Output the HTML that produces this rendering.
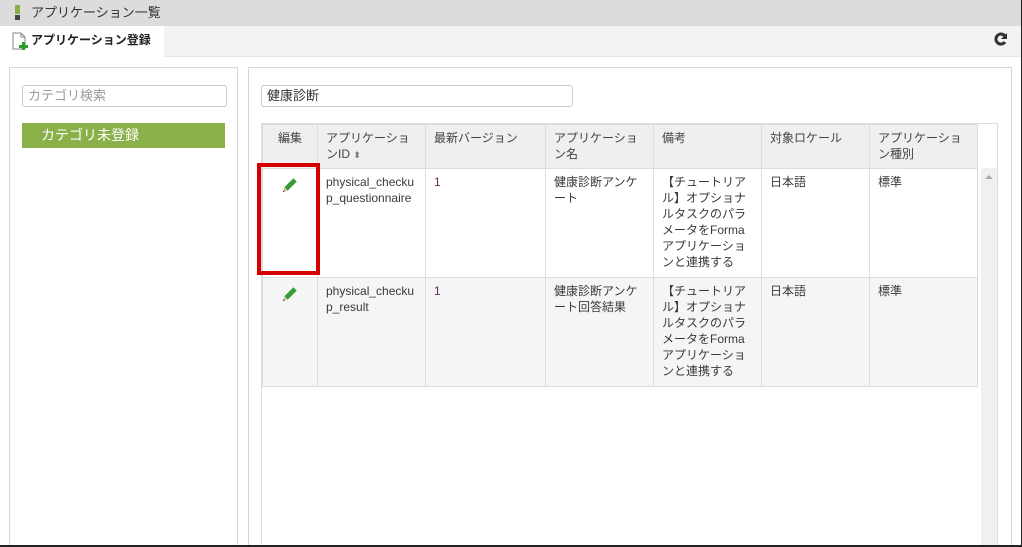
<!DOCTYPE html>
<html><head><meta charset="utf-8"><style>
*{box-sizing:border-box;margin:0;padding:0}
html,body{width:1022px;height:547px;overflow:hidden}
body{background:#fff;font-family:"Liberation Sans","Noto Sans CJK JP",sans-serif;font-size:12px;color:#333;position:relative}
.abs{position:absolute}
.frame{position:absolute;left:0;top:0;width:1022px;height:547px;border-right:1px solid #222;border-bottom:2px solid #222;pointer-events:none}
.title{left:0;top:0;width:1022px;height:26px;background:#dcdcdc;font-size:13px;line-height:26px;padding-left:31px;color:#333}
.tabbar{left:0;top:26px;width:1022px;height:31px;background:#f3f3f3;border-bottom:1px solid #e6e6e6}
.tab{left:0;top:26px;width:164px;height:31px;background:#fff;font-weight:bold;font-size:12px;line-height:28px;padding-left:31px;color:#222}
.panel{border:1px solid #d8d8d8;background:#fff}
.inp{border:1px solid #ccc;border-radius:3px;height:22px;font-size:13px;line-height:20px;padding-left:5px;color:#999}
table{border-collapse:collapse;position:absolute;left:262px;top:124px;table-layout:fixed;width:716px}
td,th{border:1px solid #ddd;vertical-align:top;text-align:left;font-weight:normal;padding:5px 8px;line-height:16px;font-size:12px;color:#3a3a3a;word-break:break-all}
th{background:#efefef;height:44px;color:#444}
tr.r td{height:109px}
tr.r2 td{background:#f5f5f5}
.pur{color:#6b2b5a}
</style></head><body>
<div class="abs title">アプリケーション一覧</div>
<div class="abs" style="left:15px;top:5px;width:5px;height:9px;background:#8ab04a"></div>
<div class="abs" style="left:15px;top:15px;width:5px;height:5px;background:#444"></div>
<div class="abs tabbar"></div>
<div class="abs tab">アプリケーション登録</div>
<svg class="abs" style="left:12px;top:32px" width="16" height="18" viewBox="0 0 16 18"><path d="M1 1h8l4 4v12H1z" fill="#fff" stroke="#888"/><path d="M9 1v4h4" fill="none" stroke="#888"/><path d="M10 10h3v3h3v3h-3v2h-3v-2H7v-3h3z" fill="#2e9a2e"/></svg>
<svg class="abs" style="left:994px;top:32px" width="14" height="14" viewBox="0 0 14 14"><path d="M11.5 5A5 5 0 1 0 11 10" fill="none" stroke="#333" stroke-width="3"/><path d="M13 1v6H7z" fill="#333"/></svg>
<div class="abs panel" style="left:9px;top:67px;width:229px;height:485px"></div>
<div class="abs panel" style="left:248px;top:67px;width:764px;height:485px"></div>
<div class="abs inp" style="left:22px;top:85px;width:205px">カテゴリ検索</div>
<div class="abs" style="left:22px;top:123px;width:203px;height:25px;background:#8ab04a;color:#fff;font-size:14px;line-height:24px;padding-left:19px">カテゴリ未登録</div>
<div class="abs inp" style="left:261px;top:85px;width:312px;color:#333">健康診断</div>
<div class="abs" style="left:261px;top:123px;width:737px;height:430px;border:1px solid #ddd"></div>
<div class="abs" style="left:981px;top:168px;width:16px;height:380px;background:#f0f0f0"></div>
<div class="abs" style="left:985px;top:175px;width:0;height:0;border:4px solid transparent;border-bottom-color:#aaa;border-top:0"></div>
<table>
<colgroup><col style="width:55px"><col style="width:108px"><col style="width:120px"><col style="width:108px"><col style="width:108px"><col style="width:108px"><col style="width:108px"></colgroup>
<tr><th style="text-align:center">編集</th><th>アプリケーションID <span style="color:#777;font-size:9px">⬍</span></th><th>最新バージョン</th><th>アプリケーション名</th><th>備考</th><th>対象ロケール</th><th>アプリケーション種別</th></tr>
<tr class="r"><td style="text-align:center"><svg width="18" height="18" viewBox="0 0 16 16" style="margin-top:2px"><path d="M11 2l3 3-8 8-3-3z" fill="#3a9a3a"/><path d="M3 10l3 3-4 1z" fill="#d9c39a"/><path d="M2 14l1-1" stroke="#333"/></svg></td><td>physical_checkup_questionnaire</td><td class="pur">1</td><td>健康診断アンケート</td><td>【チュートリアル】オプショナルタスクのパラメータをFormaアプリケーションと連携する</td><td>日本語</td><td>標準</td></tr>
<tr class="r r2"><td style="text-align:center"><svg width="18" height="18" viewBox="0 0 16 16" style="margin-top:2px"><path d="M11 2l3 3-8 8-3-3z" fill="#3a9a3a"/><path d="M3 10l3 3-4 1z" fill="#d9c39a"/><path d="M2 14l1-1" stroke="#333"/></svg></td><td>physical_checkup_result</td><td class="pur">1</td><td>健康診断アンケート回答結果</td><td>【チュートリアル】オプショナルタスクのパラメータをFormaアプリケーションと連携する</td><td>日本語</td><td>標準</td></tr>
</table>
<div class="abs" style="left:257px;top:163px;width:63px;height:112px;border:4px solid #d40000"></div>
<div class="frame"></div>
</body></html>
